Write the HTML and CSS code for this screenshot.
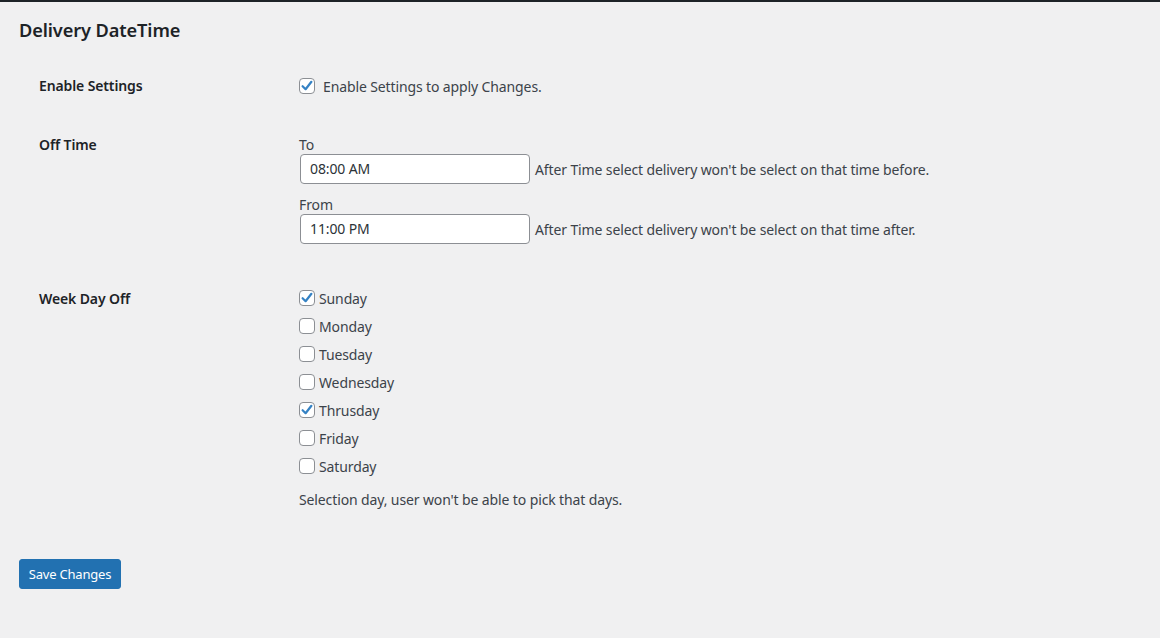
FILE: index.html
```html
<!DOCTYPE html>
<html>
<head>
<meta charset="utf-8">
<link rel="stylesheet" href="styles.css">
</head>
<body>
<div class="topbar"></div>
<div class="wrap">
  <h1 class="title">Delivery DateTime</h1>
  <div class="form-table">
    <div class="row row-enable">
      <div class="th">Enable Settings</div>
      <div class="td">
        <label class="check-line wide">
          <span class="cb checked"><svg viewBox="0 0 16 16" width="16" height="16"><path d="M3.6 8.2 L6.6 11.2 L12.4 3.8" fill="none" stroke="#3582c4" stroke-width="2.2" stroke-linecap="round" stroke-linejoin="round"/></svg></span>
          <span>Enable Settings to apply Changes.</span>
        </label>
      </div>
    </div>
    <div class="row row-time">
      <div class="th">Off Time</div>
      <div class="td">
        <div class="field-label first">To</div>
        <div class="field-line">
          <span class="input">08:00 AM</span>
          <span class="desc-inline">After Time select delivery won't be select on that time before.</span>
        </div>
        <div class="field-label second">From</div>
        <div class="field-line">
          <span class="input">11:00 PM</span>
          <span class="desc-inline">After Time select delivery won't be select on that time after.</span>
        </div>
      </div>
    </div>
    <div class="row row-days">
      <div class="th">Week Day Off</div>
      <div class="td">
        <label class="check-line"><span class="cb checked"><svg viewBox="0 0 16 16" width="16" height="16"><path d="M3.6 8.2 L6.6 11.2 L12.4 3.8" fill="none" stroke="#3582c4" stroke-width="2.2" stroke-linecap="round" stroke-linejoin="round"/></svg></span><span>Sunday</span></label>
        <label class="check-line"><span class="cb"></span><span>Monday</span></label>
        <label class="check-line"><span class="cb"></span><span>Tuesday</span></label>
        <label class="check-line"><span class="cb"></span><span>Wednesday</span></label>
        <label class="check-line"><span class="cb checked"><svg viewBox="0 0 16 16" width="16" height="16"><path d="M3.6 8.2 L6.6 11.2 L12.4 3.8" fill="none" stroke="#3582c4" stroke-width="2.2" stroke-linecap="round" stroke-linejoin="round"/></svg></span><span>Thrusday</span></label>
        <label class="check-line"><span class="cb"></span><span>Friday</span></label>
        <label class="check-line"><span class="cb"></span><span>Saturday</span></label>
        <p class="description">Selection day, user won't be able to pick that days.</p>
      </div>
    </div>
  </div>
  <div class="submit">
    <button class="button-primary" type="button">Save Changes</button>
  </div>
</div>
</body>
</html>
```
FILE: styles.css
```css
html, body {
  margin: 0;
  padding: 0;
}
body {
  background: #f0f0f1;
  font-family: "Noto Sans", "Open Sans", sans-serif;
  font-size: 14px;
  letter-spacing: -0.12px;
  color: #3c434a;
  height: 638px;
  overflow: hidden;
}
.topbar {
  height: 2px;
  background: #1d2327;
}
.wrap {
  padding-left: 19px;
}
.title {
  margin: 16px 0 0;
  font-size: 18.2px;
  line-height: 24px;
  font-weight: 600;
  color: #1d2327;
  letter-spacing: -0.1px;
}
.form-table {
  margin-top: 15px;
  padding-left: 20px;
}
.row {
  display: grid;
  grid-template-columns: 260px 1fr;
}
.th {
  padding: 20px 0;
  line-height: 18px;
  font-weight: 600;
  color: #1d2327;
}
.row-time .th {
  padding-top: 21px;
}
.row-days .th {
  padding-top: 21px;
}
.td {
  padding: 15px 0 15px 0;
}
.check-line {
  display: flex;
  align-items: center;
  height: 28px;
  gap: 4px;
}
.check-line.wide {
  gap: 8px;
}
.cb {
  width: 16px;
  height: 16px;
  box-sizing: border-box;
  border: 1px solid #8c8f94;
  border-radius: 4px;
  background: #fff;
  display: flex;
  align-items: center;
  justify-content: center;
  flex-shrink: 0;
}
.cb svg {
  display: block;
  margin: -1px;
}
.field-label {
  line-height: 19px;
}
.field-label.first {
  margin-top: 5px;
}
.field-label.second {
  margin-top: 11px;
}
.field-line {
  display: flex;
  align-items: center;
  height: 30px;
}
.input {
  width: 230px;
  height: 30px;
  box-sizing: border-box;
  margin-left: 1px;
  border: 1px solid #8c8f94;
  border-radius: 4px;
  background: #fff;
  padding: 0 9px;
  line-height: 28px;
  color: #2c3338;
}
.desc-inline {
  margin-left: 5px;
}
.row-time .td {
  padding-bottom: 25px;
}
.description {
  margin: 10px 0 0;
  line-height: 19px;
}
.submit {
  margin-top: 35px;
}
.button-primary {
  font-family: inherit;
  font-size: 13px;
  letter-spacing: -0.2px;
  height: 30px;
  width: 102px;
  padding: 0;
  line-height: 28px;
  background: #2271b1;
  border: 1px solid #2271b1;
  border-radius: 3px;
  color: #fff;
  white-space: nowrap;
}
```
